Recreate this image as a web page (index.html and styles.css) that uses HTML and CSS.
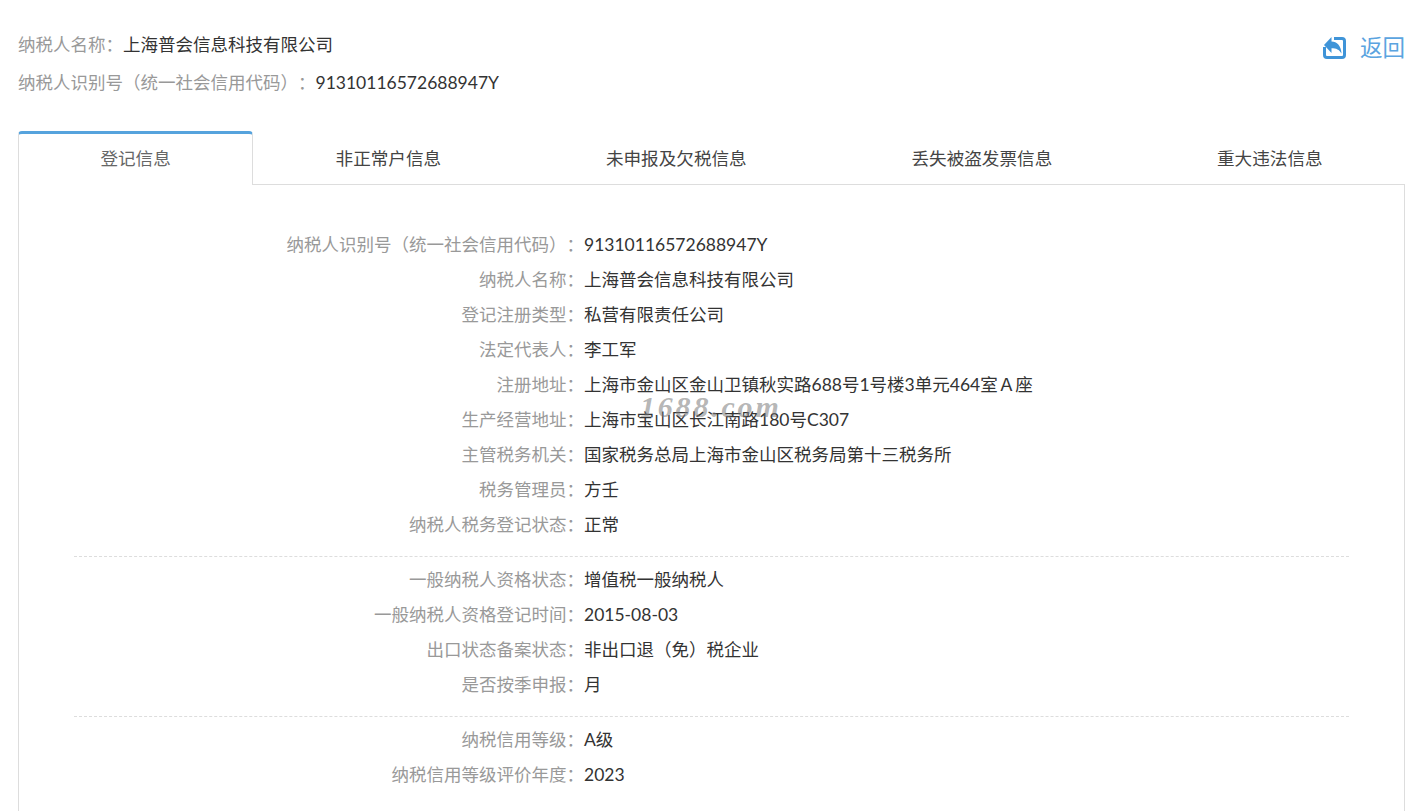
FILE: index.html
```html
<!DOCTYPE html>
<html lang="zh-CN">
<head>
<meta charset="utf-8">
<title>纳税人信息</title>
<link rel="stylesheet" href="styles.css">
</head>
<body>
<header class="head">
  <div class="head-info">
    <div class="head-row"><span class="key">纳税人名称：</span><span class="val">上海普会信息科技有限公司</span></div>
    <div class="head-row"><span class="key">纳税人识别号（统一社会信用代码）：</span><span class="val">91310116572688947Y</span></div>
  </div>
  <a class="back">
    <svg class="back-icon" viewBox="0 0 23 22" width="23" height="22" aria-hidden="true">
      <path fill="none" stroke="#3f94d8" stroke-width="3" d="M1.500 10v8a2.500 2.500 0 0 0 2.500 2.500h15a2.500 2.500 0 0 0 2.500-2.500V4A2.500 2.500 0 0 0 19 1.500h-8"/>
      <path fill="#3f94d8" d="M1 8 8.500 0v4.500c5.500.3 9.500 3.700 10 12-2.300-4-5.200-5.300-10-5.300V16z"/>
    </svg>
    <span>返回</span>
  </a>
</header>
<nav class="tabs">
  <div class="tab active">登记信息</div>
  <div class="tab">非正常户信息</div>
  <div class="tab">未申报及欠税信息</div>
  <div class="tab">丢失被盗发票信息</div>
  <div class="tab">重大违法信息</div>
</nav>
<main class="panel">
  <section class="group">
    <div class="row"><span class="label">纳税人识别号（统一社会信用代码）：</span><span class="value">91310116572688947Y</span></div>
    <div class="row"><span class="label">纳税人名称：</span><span class="value">上海普会信息科技有限公司</span></div>
    <div class="row"><span class="label">登记注册类型：</span><span class="value">私营有限责任公司</span></div>
    <div class="row"><span class="label">法定代表人：</span><span class="value">李工军</span></div>
    <div class="row"><span class="label">注册地址：</span><span class="value">上海市金山区金山卫镇秋实路688号1号楼3单元464室Ａ座</span></div>
    <div class="row"><span class="label">生产经营地址：</span><span class="value">上海市宝山区长江南路180号C307</span></div>
    <div class="row"><span class="label">主管税务机关：</span><span class="value">国家税务总局上海市金山区税务局第十三税务所</span></div>
    <div class="row"><span class="label">税务管理员：</span><span class="value">方壬</span></div>
    <div class="row"><span class="label">纳税人税务登记状态：</span><span class="value">正常</span></div>
  </section>
  <section class="group">
    <div class="row"><span class="label">一般纳税人资格状态：</span><span class="value">增值税一般纳税人</span></div>
    <div class="row"><span class="label">一般纳税人资格登记时间：</span><span class="value">2015-08-03</span></div>
    <div class="row"><span class="label">出口状态备案状态：</span><span class="value">非出口退（免）税企业</span></div>
    <div class="row"><span class="label">是否按季申报：</span><span class="value">月</span></div>
  </section>
  <section class="group last">
    <div class="row"><span class="label">纳税信用等级：</span><span class="value">A级</span></div>
    <div class="row"><span class="label">纳税信用等级评价年度：</span><span class="value">2023</span></div>
  </section>
  <div class="watermark">1688.com</div>
</main>
</body>
</html>
```
FILE: styles.css
```css
* { box-sizing: border-box; }
html, body { height: 100%; overflow: hidden; }
body {
  margin: 0;
  padding: 26px 14px 0 18px;
  display: flex;
  flex-direction: column;
  background: #fff;
  color: #333;
  font-family: Lato, "Noto Sans CJK SC", "Noto Sans", sans-serif;
  font-size: 17.5px;
  text-spacing-trim: space-all;
}
.head { display: flex; flex: none; justify-content: space-between; align-items: flex-start; }
.head-info { display: flex; flex-direction: column; }
.head-row { height: 37.500px; line-height: 37px; white-space: nowrap; }
.key { color: #999; }
.val { color: #333; }
.back { display: flex; align-items: center; gap: 14px; margin-top: 3px; color: #5ba4e0; font-size: 22.500px; line-height: 37px; }
.back-icon { display: block; }
.tabs { display: flex; flex: none; margin-top: 30px; height: 54px; border-bottom: 1px solid #ddd; font-size: 17.600px; }
.tab { padding: 0 82.400px; line-height: 56px; color: #444; white-space: nowrap; height: 54px; }
.tab.active {
  padding: 0 81.400px;
  color: #666;
  background: #fff;
  border: 1px solid #ddd;
  border-top: 3px solid #56a3dd;
  border-bottom: 0;
  border-radius: 4px 4px 0 0;
  line-height: 49px;
}
.panel {
  position: relative;
  flex: 1;
  padding: 41px 55px 0;
  border: 1px solid #ddd;
  border-top: 0;
  border-bottom: 0;
}
.group { padding-bottom: 15px; margin-bottom: 4px; border-bottom: 1px dashed #ddd; }
.group.last { border-bottom: 0; padding-bottom: 0; margin-bottom: 0; }
.row { display: flex; height: 35px; line-height: 37px; white-space: nowrap; }
.label { width: 510px; text-align: right; color: #999; }
.value { color: #333; }
.watermark {
  position: absolute;
  left: 621px;
  top: 206px;
  color: rgba(120, 120, 120, .55);
  font-family: "Liberation Serif", serif;
  font-weight: bold;
  font-style: italic;
  font-size: 30px;
  letter-spacing: 2.800px;
  line-height: 32px;
}
```
